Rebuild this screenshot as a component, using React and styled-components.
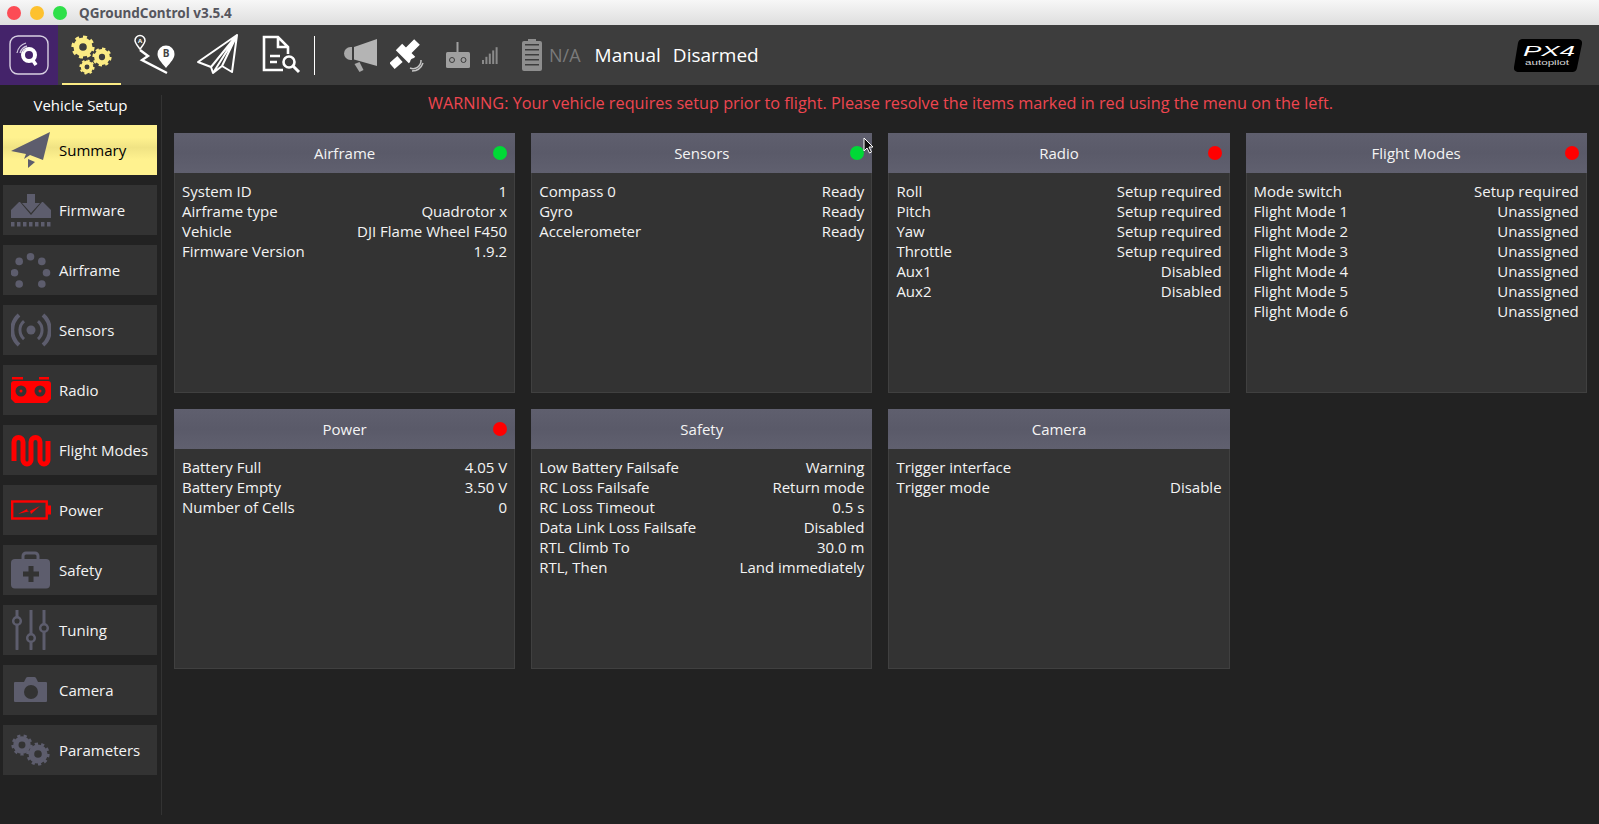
import React from 'react';
import styled, {createGlobalStyle} from 'styled-components';

const UI_FONT = '"Open Sans", "Noto Sans", sans-serif';
const SLATE = '#5d5d6d';
const GOLD = '#fbeb84';
const RED = '#ff0000';

const GlobalStyle = createGlobalStyle`
	html, body {
		margin: 0;
		padding: 0;
		background: #222222;
		font-family: ${UI_FONT};
		overflow: hidden;
	}
`;

const Page = styled.div`
	width: 1599px;
	height: 824px;
	display: flex;
	flex-direction: column;
	position: relative;
	overflow: hidden;
`;

const TitleBar = styled.div`
	height: 25px;
	display: flex;
	align-items: center;
	background: linear-gradient(#f7f7f7, #dedede);
	flex-shrink: 0;
`;

const WindowDots = styled.div`
	display: flex;
	gap: 9px;
	margin-left: 7px;
	width: 72px;
`;

const WindowDot = styled.span`
	width: 14px;
	height: 14px;
	border-radius: 50%;
	background: ${p => p.$color};
`;

const WindowTitle = styled.span`
	font-family: "Noto Sans", sans-serif;
	font-weight: 700;
	font-size: 13.5px;
	color: #55555d;
`;

const Toolbar = styled.div`
	height: 60px;
	display: flex;
	align-items: center;
	background: #3d3d3d;
	flex-shrink: 0;
`;

const LogoBox = styled.div`
	width: 58px;
	height: 60px;
	background: #44236a;
	display: flex;
	align-items: center;
	justify-content: center;
	margin-right: 4px;
`;

const ToolButton = styled.div`
	width: 59px;
	height: 60px;
	margin-right: 4px;
	position: relative;
	border-bottom: ${p => (p.$active ? `2px solid ${GOLD}` : '2px solid transparent')};
	box-sizing: border-box;
	svg {
		display: block;
	}
`;

const ToolDivider = styled.div`
	width: 1px;
	height: 39px;
	background: #ffffff;
	margin-right: 29px;
`;

const Indicator = styled.div`
	display: flex;
	align-items: center;
	margin-left: ${p => p.$gap || 0}px;
	svg {
		display: block;
	}
`;

const NoValue = styled.span`
	font-size: 18px;
	color: #7a7a7a;
	margin-left: 7px;
`;

const StatusText = styled.span`
	font-size: 19px;
	color: #ffffff;
	margin-left: ${p => p.$gap}px;
`;

const Px4Logo = styled.div`
	margin-left: auto;
	margin-right: 17px;
	svg {
		display: block;
	}
`;

const Body = styled.div`
	flex: 1;
	display: flex;
	min-height: 0;
`;

const Sidebar = styled.div`
	width: 161px;
	height: 720px;
	margin-top: 10px;
	box-sizing: content-box;
	border-right: 1px solid #333333;
	flex-shrink: 0;
`;

const SidebarTitle = styled.div`
	height: 30px;
	line-height: 20px;
	text-align: center;
	font-size: 15px;
	color: #ffffff;
`;

const SideList = styled.div`
	display: flex;
	flex-direction: column;
	gap: 10px;
	padding: 0 4px 0 3px;
`;

const SideButton = styled.div`
	height: 50px;
	display: flex;
	align-items: center;
	padding-left: 8px;
	gap: 8px;
	font-size: 15px;
	color: ${p => (p.$active ? '#000000' : '#f4f4f4')};
	background: ${p => (p.$active
		? 'linear-gradient(#fff28f 0%, #fff28f 25%, #f0e384 45%, #fff28f 70%, #fff28f 100%)'
		: '#333333')};
	svg {
		display: block;
		flex-shrink: 0;
	}
`;

const Main = styled.div`
	flex: 1;
	padding: 0 12px;
`;

const Warning = styled.div`
	height: 48px;
	line-height: 36px;
	text-align: center;
	font-size: 16.25px;
	color: #ee4650;
	white-space: nowrap;
`;

const CardGrid = styled.div`
	display: grid;
	grid-template-columns: repeat(4, 341.2px);
	grid-auto-rows: 260px;
	gap: 16px;
`;

const Card = styled.div`
	background: #333333;
	border: 1px solid #404040;
	box-sizing: border-box;
`;

const CardHeader = styled.div`
	height: 40px;
	margin: -1px -1px 0;
	position: relative;
	display: flex;
	align-items: center;
	justify-content: center;
	font-size: 15px;
	color: #f4f4f4;
	background: linear-gradient(#5f5f6e, #5a5a69 50%, #60606f);
`;

const StatusDot = styled.span`
	position: absolute;
	right: 8px;
	top: 13px;
	width: 14px;
	height: 14px;
	border-radius: 50%;
	background: ${p => p.$color};
`;

const CardRows = styled.div`
	padding: 8px 7px 0;
`;

const Row = styled.div`
	height: 20px;
	line-height: 20px;
	display: flex;
	justify-content: space-between;
	font-size: 15px;
	color: #f4f4f4;
	white-space: nowrap;
`;

const Cursor = styled.svg`
	position: absolute;
	left: 863px;
	top: 137px;
`;

const Gear = ({cx, cy, r, teeth = 8, color}) => (
	<g fill="none" stroke={color}>
		<circle cx={cx} cy={cy} r={r * 0.58} strokeWidth={r * 0.5}/>
		<circle cx={cx} cy={cy} r={r * 0.88} strokeWidth={r * 0.26} pathLength={teeth * 2} strokeDasharray="1 1"/>
	</g>
);

const QLogo = () => (
	<svg width="40" height="40" viewBox="0 0 40 40">
		<rect x="1" y="1" width="38" height="38" rx="8" fill="none" stroke="#d7cfe2" strokeWidth="1.4"/>
		<circle cx="20" cy="20" r="6" fill="none" stroke="#ffffff" strokeWidth="4"/>
		<path d="M23 24l4 6" stroke="#ffffff" strokeWidth="3.500"/>
		<path d="M8 18a13 13 0 0 1 9-10M11 18a10 10 0 0 1 7-7M14 17a6 6 0 0 1 3-3" fill="none" stroke="#cfc6dc" strokeWidth="1.300"/>
	</svg>
);

const SetupTool = () => (
	<svg width="59" height="58" viewBox="0 0 59 58">
		<Gear cx={21} cy={22} r={11.5} teeth={8} color={GOLD}/>
		<Gear cx={40} cy={32} r={9.5} teeth={8} color={GOLD}/>
		<Gear cx={25} cy={42} r={7.5} teeth={8} color={GOLD}/>
	</svg>
);

const PlanTool = () => (
	<svg width="59" height="58" viewBox="0 0 59 58">
		<path d="M15 24c-3-4-5-6-5-8.500a5 5 0 0 1 10 0c0 2.500-2 4.500-5 8.500z" fill="#3d3d3d" stroke="#ffffff" strokeWidth="1.5"/>
		<text x="15" y="18" fontSize="6" fontWeight="700" textAnchor="middle" fill="#ffffff" fontFamily={UI_FONT}>A</text>
		<path d="M15 25l8 6-6 4 25 13" fill="none" stroke="#ffffff" strokeWidth="2.400"/>
		<path d="M41 43c-5-6-8.500-9.500-8.500-14a8.500 8.500 0 0 1 17 0c0 4.500-3.500 8-8.500 14z" fill="#ffffff"/>
		<text x="41" y="32" fontSize="10" fontWeight="700" textAnchor="middle" fill="#444444" fontFamily={UI_FONT}>B</text>
	</svg>
);

const FlyTool = () => (
	<svg width="59" height="58" viewBox="0 0 59 58">
		<path d="M49 10L10 37l13 5 2 6 9-7 10 6zM49 10L23 42M49 10L34 41M49 10L25 48" fill="none" stroke="#ffffff" strokeWidth="2" strokeLinejoin="round"/>
	</svg>
);

const AnalyzeTool = () => (
	<svg width="59" height="58" viewBox="0 0 59 58">
		<path d="M32 45H13V12h14l10 10v7M27 12v10h10" fill="none" stroke="#ffffff" strokeWidth="2.600"/>
		<path d="M19 31h10M19 37h7" stroke="#ffffff" strokeWidth="2.600"/>
		<circle cx="38" cy="37" r="5.500" fill="none" stroke="#ffffff" strokeWidth="2.600"/>
		<path d="M42 41l6 6" stroke="#ffffff" strokeWidth="3"/>
	</svg>
);

const Megaphone = () => (
	<svg width="34" height="34" viewBox="0 0 34 34">
		<path d="M8 9v13H6.500a6.500 6.500 0 0 1 0-13z" fill="#a8a8a8"/>
		<path d="M10 9L33 1v27L10 21.500z" fill="#b4b4b4"/>
		<path d="M10.500 26l5-2 4 8-4 2z" fill="#a8a8a8"/>
	</svg>
);

const Satellite = () => (
	<svg width="34" height="34" viewBox="0 0 34 34">
		<path d="M18 13l9-9M2 28l8-7" stroke="#ffffff" strokeWidth="8" fill="none"/>
		<path d="M9 9l13 13" stroke="#ffffff" strokeWidth="9" fill="none"/>
		<path d="M31 22a8 8 0 0 1-11 8M33 25a12 12 0 0 1-11 8" fill="none" stroke="#c4c4c4" strokeWidth="1.500"/>
		<circle cx="24" cy="24" r="3" fill="none" stroke="#3d3d3d" strokeWidth="1.500"/>
	</svg>
);

const RemoteIcon = () => (
	<svg width="24" height="26" viewBox="0 0 24 26">
		<rect x="10.500" width="2" height="10" fill="#a0a0a0"/>
		<rect y="10" width="24" height="16" rx="1.500" fill="#a0a0a0"/>
		<circle cx="6" cy="18" r="2.500" fill="none" stroke="#3d3d3d"/>
		<circle cx="17.500" cy="18" r="2.500" fill="none" stroke="#3d3d3d"/>
	</svg>
);

const SignalIcon = () => (
	<svg width="16" height="17" viewBox="0 0 16 17">
		{[0, 1, 2, 3, 4].map(i => (
			<rect key={i} x={i * 3.4} y={13 - i * 3.2} width="2" height={4 + i * 3.2} fill="#8a8a8a"/>
		))}
	</svg>
);

const BatteryIcon = () => (
	<svg width="20" height="32" viewBox="0 0 20 32">
		<path d="M6 0h8v2h4a2 2 0 0 1 2 2v26a2 2 0 0 1-2 2H2a2 2 0 0 1-2-2V4a2 2 0 0 1 2-2h4z" fill="#8e8e8e"/>
		{[6, 11, 16, 21, 26].map(y => (
			<rect key={y} x="3" y={y - 1} width="14" height="1.500" fill="#3d3d3d"/>
		))}
	</svg>
);

const Px4 = () => (
	<svg width="68" height="33" viewBox="0 0 68 33">
		<path d="M8 0h56a4 4 0 0 1 4 5l-5 24a5 5 0 0 1-5 4H4a4 4 0 0 1-4-5L4 4a5 5 0 0 1 4-4z" fill="#000000"/>
		<text x="35" y="17" textAnchor="middle" fontSize="14" fontStyle="italic" fill="#ffffff" fontFamily={'"Liberation Sans", sans-serif'} textLength="52" lengthAdjust="spacingAndGlyphs">PX4</text>
		<text x="33" y="26" textAnchor="middle" fontSize="8" fill="#d8d8d8" fontFamily={'"Liberation Sans", sans-serif'} textLength="44" lengthAdjust="spacingAndGlyphs">autopilot</text>
	</svg>
);

const sideIcons = {
	Summary: (
		<g fill={SLATE}>
			<path d="M0 21L39 2l-7 28-13-5-6 4 2-5z"/>
			<path d="M17 29l7 3-7 6z"/>
		</g>
	),
	Firmware: (
		<g fill={SLATE}>
			<path d="M16 4h8v9h5l-9 10-9-10h5z"/>
			<path d="M8 12h1l11 13 11-13h1l8 8v8H0v-8z"/>
			{[0, 6, 12, 18, 24, 30, 36].map(x => <rect key={x} x={x} y="32" width="3.500" height="4.500"/>)}
		</g>
	),
	Airframe: (
		<g fill={SLATE}>
			{[-90, -45, -135, 0, 180, 45, 135].map(a => (
				<circle key={a} cx={19.500 + 16 * Math.cos(a * Math.PI / 180)} cy={22.700 + 16 * Math.sin(a * Math.PI / 180)} r="3.800"/>
			))}
		</g>
	),
	Sensors: (
		<g fill="none" stroke={SLATE}>
			<circle cx="20" cy="20" r="4.500" fill={SLATE} stroke="none"/>
			<path d="M13 11a12 12 0 0 0 0 18M27 11a12 12 0 0 1 0 18" strokeWidth="3"/>
			<path d="M8 5a20 20 0 0 0 0 30M32 5a20 20 0 0 1 0 30" strokeWidth="4"/>
		</g>
	),
	Radio: (
		<g>
			<rect x="1" y="7" width="11" height="2.500" fill={RED}/>
			<rect x="28" y="7" width="10" height="2.500" fill={RED}/>
			<path d="M3 11h34a3 3 0 0 1 3 3v15l-4 4H4l-4-4V14a3 3 0 0 1 3-3z" fill={RED}/>
			<circle cx="10" cy="21" r="5.500" fill="#333333"/>
			<circle cx="29" cy="21" r="5.500" fill="#333333"/>
			<circle cx="10" cy="21" r="1.500" fill={RED}/>
			<circle cx="29" cy="21" r="1.500" fill={RED}/>
		</g>
	),
	'Flight Modes': (
		<path d="M3 31V12a4.500 4.500 0 0 1 9 0v18a4 4 0 0 0 8 0V12a4.500 4.500 0 0 1 9 0v18a4 4 0 0 0 8 0V11" fill="none" stroke={RED} strokeWidth="5"/>
	),
	Power: (
		<g>
			<rect x="1.200" y="11.500" width="34.500" height="17" fill="none" stroke={RED} strokeWidth="2.400"/>
			<rect x="37" y="15.500" width="3" height="9" fill={RED}/>
			<path d="M7 24l9-5 1 3 12-6-9 8-1-3z" fill={RED}/>
		</g>
	),
	Safety: (
		<g>
			<path d="M12 10V6a3 3 0 0 1 3-3h9a3 3 0 0 1 3 3v4" fill="none" stroke={SLATE} strokeWidth="3"/>
			<rect y="9" width="39" height="29.500" rx="4" fill={SLATE}/>
			<path d="M20 16v16M12 24h16" stroke="#333333" strokeWidth="5"/>
		</g>
	),
	Tuning: (
		<g stroke={SLATE} fill="#333333">
			<path d="M6 0v39M20 0v39M33 0v39" strokeWidth="3" strokeLinecap="round"/>
			<circle cx="6" cy="11" r="3.800" strokeWidth="2.500"/>
			<circle cx="20" cy="28" r="3.800" strokeWidth="2.500"/>
			<circle cx="33" cy="18" r="3.800" strokeWidth="2.500"/>
		</g>
	),
	Camera: (
		<g>
			<path d="M4 12h9l2-4a2 2 0 0 1 2-1h6a2 2 0 0 1 2 1l2 4h8a1 1 0 0 1 1 1v18a1 1 0 0 1-1 1H4a1 1 0 0 1-1-1V13a1 1 0 0 1 1-1z" fill={SLATE}/>
			<circle cx="20" cy="22" r="7" fill="#333333"/>
		</g>
	),
	Parameters: (
		<g>
			<Gear cx={11} cy={15} r={10.500} teeth={9} color={SLATE}/>
			<Gear cx={27} cy={24} r={11.500} teeth={10} color={SLATE}/>
		</g>
	)
};

const sideItems = Object.keys(sideIcons);

const cards = [
	{title: 'Airframe', status: 'ok', rows: [['System ID', '1'], ['Airframe type', 'Quadrotor x'], ['Vehicle', 'DJI Flame Wheel F450'], ['Firmware Version', '1.9.2']]},
	{title: 'Sensors', status: 'ok', rows: [['Compass 0', 'Ready'], ['Gyro', 'Ready'], ['Accelerometer', 'Ready']]},
	{title: 'Radio', status: 'bad', rows: [['Roll', 'Setup required'], ['Pitch', 'Setup required'], ['Yaw', 'Setup required'], ['Throttle', 'Setup required'], ['Aux1', 'Disabled'], ['Aux2', 'Disabled']]},
	{title: 'Flight Modes', status: 'bad', rows: [['Mode switch', 'Setup required'], ['Flight Mode 1', 'Unassigned'], ['Flight Mode 2', 'Unassigned'], ['Flight Mode 3', 'Unassigned'], ['Flight Mode 4', 'Unassigned'], ['Flight Mode 5', 'Unassigned'], ['Flight Mode 6', 'Unassigned']]},
	{title: 'Power', status: 'bad', rows: [['Battery Full', '4.05 V'], ['Battery Empty', '3.50 V'], ['Number of Cells', '0']]},
	{title: 'Safety', rows: [['Low Battery Failsafe', 'Warning'], ['RC Loss Failsafe', 'Return mode'], ['RC Loss Timeout', '0.5 s'], ['Data Link Loss Failsafe', 'Disabled'], ['RTL Climb To', '30.0 m'], ['RTL, Then', 'Land immediately']]},
	{title: 'Camera', rows: [['Trigger interface', ''], ['Trigger mode', 'Disable']]}
];

const dotColors = {ok: '#00d936', bad: '#ff0000'};

export default function App() {
	return (
		<Page>
			<GlobalStyle/>
			<TitleBar>
				<WindowDots>
					<WindowDot $color="#fc4c55"/>
					<WindowDot $color="#fdc12e"/>
					<WindowDot $color="#2fe04a"/>
				</WindowDots>
				<WindowTitle>QGroundControl v3.5.4</WindowTitle>
			</TitleBar>
			<Toolbar>
				<LogoBox><QLogo/></LogoBox>
				<ToolButton $active><SetupTool/></ToolButton>
				<ToolButton><PlanTool/></ToolButton>
				<ToolButton><FlyTool/></ToolButton>
				<ToolButton><AnalyzeTool/></ToolButton>
				<ToolDivider/>
				<Indicator><Megaphone/></Indicator>
				<Indicator $gap={12}><Satellite/></Indicator>
				<Indicator $gap={22}><RemoteIcon/></Indicator>
				<Indicator $gap={12}><SignalIcon/></Indicator>
				<Indicator $gap={24}>
					<BatteryIcon/>
					<NoValue>N/A</NoValue>
				</Indicator>
				<StatusText $gap={14}>Manual</StatusText>
				<StatusText $gap={12}>Disarmed</StatusText>
				<Px4Logo><Px4/></Px4Logo>
			</Toolbar>
			<Body>
				<Sidebar>
					<SidebarTitle>Vehicle Setup</SidebarTitle>
					<SideList>
						{sideItems.map(name => (
							<SideButton key={name} $active={name === 'Summary'}>
								<svg width="40" height="40" viewBox="0 0 40 40">{sideIcons[name]}</svg>
								{name}
							</SideButton>
						))}
					</SideList>
				</Sidebar>
				<Main>
					<Warning>WARNING: Your vehicle requires setup prior to flight. Please resolve the items marked in red using the menu on the left.</Warning>
					<CardGrid>
						{cards.map(card => (
							<Card key={card.title}>
								<CardHeader>
									{card.title}
									{card.status && <StatusDot $color={dotColors[card.status]}/>}
								</CardHeader>
								<CardRows>
									{card.rows.map(([label, value]) => (
										<Row key={label}>
											<span>{label}</span>
											<span>{value}</span>
										</Row>
									))}
								</CardRows>
							</Card>
						))}
					</CardGrid>
				</Main>
			</Body>
			<Cursor width="11" height="18" viewBox="0 0 11 18">
				<path d="M1 1v13l3-3 2.500 5 2-1-2.500-5h4z" fill="#111111" stroke="#ffffff" strokeWidth="1"/>
			</Cursor>
		</Page>
	);
}
